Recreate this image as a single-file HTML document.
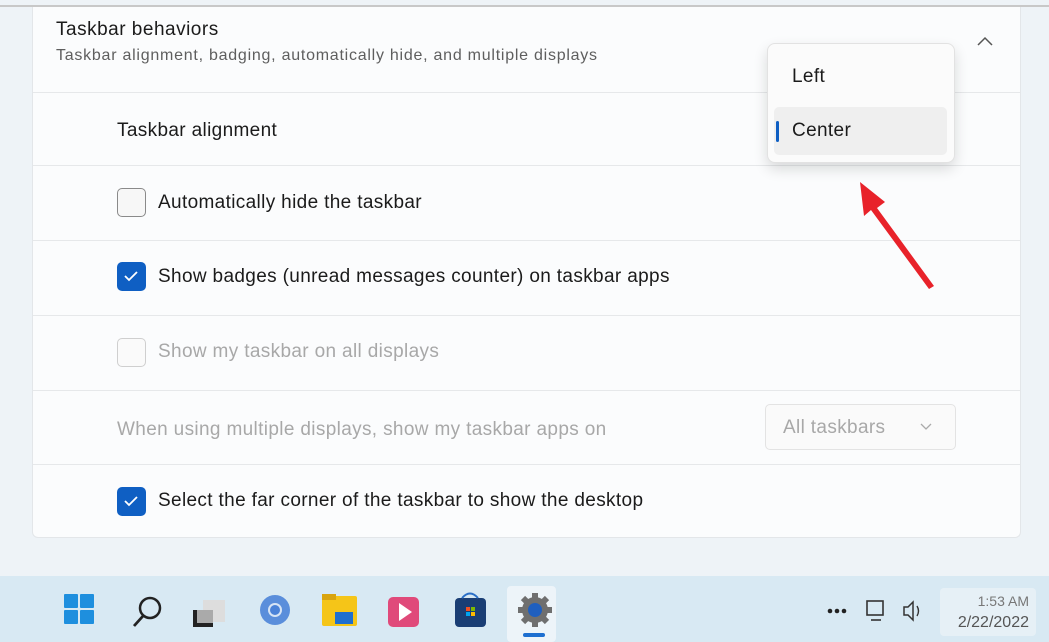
<!DOCTYPE html>
<html><head><meta charset="utf-8"><style>
*{margin:0;padding:0;box-sizing:border-box}
body{width:1049px;height:642px;overflow:hidden;background:#eef3f7;font-family:"Liberation Sans",sans-serif;position:relative;color:#1b1b1b}
.topline{position:absolute;left:0;top:5px;width:1049px;height:2px;background:#c8c8c8}
.card{position:absolute;left:32px;top:7px;width:989px;height:531px;background:#fbfcfd;border:1px solid #e3e6e9;border-top:none;border-radius:0 0 6px 6px}
.sep{position:absolute;left:33px;width:987px;height:1px;background:#e6e8ea}
.t{position:absolute;font-size:19px;letter-spacing:0.35px;white-space:nowrap}
.cb{position:absolute;left:117px;width:29px;height:29px;border-radius:5px;border:1.5px solid #8a8a8a;background:#f7f7f7}
.cb.on{background:#0f5fc3;border-color:#0f5fc3}
.cb.dis{border-color:#cfcfcf;background:#fafafa}
.gray{color:#a8a8a8}
.taskbar{position:absolute;left:0;top:576px;width:1049px;height:66px;background:#d8e9f3}
</style></head><body>
<div class="topline"></div>
<div class="card"></div>
<div class="t" style="left:56px;top:19px;font-size:19px;letter-spacing:0.5px">Taskbar behaviors</div>
<div class="t" style="left:56px;top:47px;font-size:16px;letter-spacing:0.75px;color:#5e5e5e">Taskbar alignment, badging, automatically hide, and multiple displays</div>
<svg style="position:absolute;left:977px;top:36px" width="16" height="12"><path d="M1 9 L8 2 L15 9" fill="none" stroke="#555" stroke-width="1.5"/></svg>
<div class="sep" style="top:92px"></div>
<div class="t" style="left:117px;top:120px">Taskbar alignment</div>
<div class="sep" style="top:165px"></div>
<div class="cb" style="top:188px"></div>
<div class="t" style="left:158px;top:192px">Automatically hide the taskbar</div>
<div class="sep" style="top:240px"></div>
<div class="cb on" style="top:262px"><svg width="26" height="26"><path d="M7 13 L11 17 L19 9" fill="none" stroke="#fff" stroke-width="1.8"/></svg></div>
<div class="t" style="left:158px;top:266px">Show badges (unread messages counter) on taskbar apps</div>
<div class="sep" style="top:315px"></div>
<div class="cb dis" style="top:338px"></div>
<div class="t gray" style="left:158px;top:341px">Show my taskbar on all displays</div>
<div class="sep" style="top:390px"></div>
<div class="t gray" style="left:117px;top:419px">When using multiple displays, show my taskbar apps on</div>
<div style="position:absolute;left:765px;top:404px;width:191px;height:46px;border:1px solid #e3e3e3;border-radius:5px;background:#fafafa"></div>
<div class="t gray" style="left:783px;top:417px">All taskbars</div>
<svg style="position:absolute;left:920px;top:423px" width="12" height="8"><path d="M1 1 L6 6 L11 1" fill="none" stroke="#aaa" stroke-width="1.3"/></svg>
<div class="sep" style="top:464px"></div>
<div class="cb on" style="top:487px"><svg width="26" height="26"><path d="M7 13 L11 17 L19 9" fill="none" stroke="#fff" stroke-width="1.8"/></svg></div>
<div class="t" style="left:158px;top:490px">Select the far corner of the taskbar to show the desktop</div>
<div style="position:absolute;left:767px;top:43px;width:188px;height:120px;background:#fbfbfb;border:1px solid #e2e2e2;border-radius:8px;box-shadow:0 6px 14px rgba(0,0,0,0.14)"></div>
<div style="position:absolute;left:774px;top:107px;width:173px;height:48px;background:#efefef;border-radius:5px"></div>
<div style="position:absolute;left:776px;top:121px;width:3px;height:21px;background:#0f5fc3;border-radius:2px"></div>
<div class="t" style="left:792px;top:66px">Left</div>
<div class="t" style="left:792px;top:120px">Center</div>
<svg style="position:absolute;left:850px;top:178px" width="90" height="112"><path d="M84 108 L27 30 L35 24 L10 4 L14 38 L21 32 L79 111 Z" fill="#e8222a"/></svg>
<div class="taskbar"></div>
<svg style="position:absolute;left:0;top:576px" width="1049" height="66">
<g fill="#1e8fde"><rect x="64" y="18" width="14" height="14" rx="1"/><rect x="80" y="18" width="14" height="14" rx="1"/><rect x="64" y="34" width="14" height="14" rx="1"/><rect x="80" y="34" width="14" height="14" rx="1"/></g>
<circle cx="150" cy="32" r="10" fill="none" stroke="#222" stroke-width="2.5"/><path d="M143 40 L134 50" stroke="#222" stroke-width="2.8"/>
<rect x="203" y="24" width="22" height="22" fill="#ddd"/><rect x="193" y="34" width="20" height="17" fill="#222"/><rect x="197" y="34" width="16" height="13" fill="#aaa"/>
<circle cx="275" cy="34" r="15" fill="#5a8edb"/><circle cx="275" cy="34" r="7" fill="#d6e4f5"/><circle cx="275" cy="34" r="5" fill="#4a82d8"/>
<rect x="322" y="20" width="35" height="30" rx="2" fill="#f5c518"/><rect x="322" y="18" width="14" height="6" fill="#d9a40e"/><rect x="335" y="36" width="18" height="12" fill="#1e6fd0"/>
<rect x="388" y="21" width="31" height="30" rx="5" fill="#e04a7a"/><path d="M399 27 L412 36 L399 45 Z" fill="#fff"/>
<rect x="455" y="22" width="31" height="29" rx="4" fill="#1a3e74"/><path d="M462 22 q8 -9 16 0" stroke="#2a6fc7" stroke-width="2" fill="none"/>
<rect x="466" y="31" width="4" height="4" fill="#f25022"/><rect x="471" y="31" width="4" height="4" fill="#7fba00"/><rect x="466" y="36" width="4" height="4" fill="#00a4ef"/><rect x="471" y="36" width="4" height="4" fill="#ffb900"/>
<rect x="507" y="10" width="49" height="56" rx="4" fill="#edf4f9"/>
<circle cx="535" cy="34" r="13" fill="#6f6f6f"/><g stroke="#6f6f6f" stroke-width="6"><path d="M535 17 v34 M518 34 h34 M523 22 l24 24 M547 22 l-24 24"/></g><circle cx="535" cy="34" r="7" fill="#1f5fbf"/>
<rect x="523" y="57" width="22" height="4" rx="2" fill="#1e6fd0"/>
<g fill="#222"><circle cx="830" cy="35" r="2.3"/><circle cx="837" cy="35" r="2.3"/><circle cx="844" cy="35" r="2.3"/></g>
<rect x="867" y="25" width="16" height="14" fill="none" stroke="#333" stroke-width="1.6"/><path d="M871 44 h10" stroke="#333" stroke-width="1.6"/>
<path d="M904 31 h4 l5 -5 v18 l-5 -5 h-4 z" fill="none" stroke="#333" stroke-width="1.5"/><path d="M917 30 q3 5 0 10" fill="none" stroke="#333" stroke-width="1.4"/>
<rect x="940" y="12" width="96" height="48" rx="4" fill="#e6f0f6"/>
<text x="1029" y="30" font-size="14" text-anchor="end" fill="#777" font-family="Liberation Sans">1:53 AM</text>
<text x="1029" y="51" font-size="16" text-anchor="end" fill="#555" font-family="Liberation Sans">2/22/2022</text>
</svg>
</body></html>
